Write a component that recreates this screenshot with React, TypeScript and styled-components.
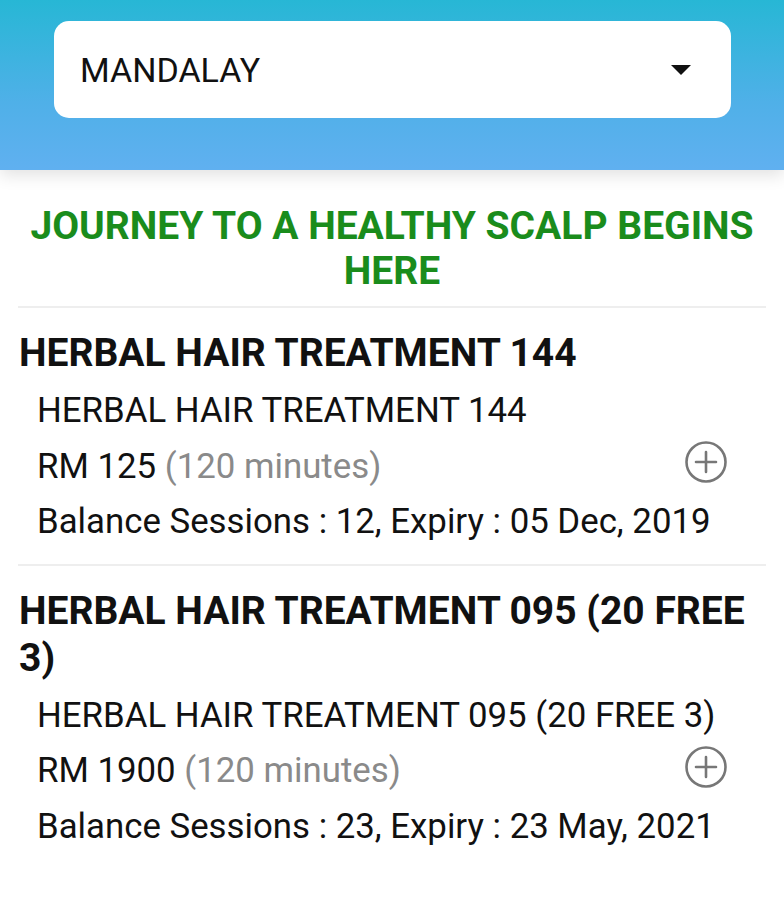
import React from "react";
import styled, { createGlobalStyle } from "styled-components";

const Global = createGlobalStyle`
  html, body { margin: 0; padding: 0; background: #fff; }
  body { font-family: Roboto, "Noto Sans", Arial, sans-serif; }
`;

const Page = styled.div`
  width: 784px;
  min-height: 900px;
  background: #fff;
`;

const Header = styled.header`
  height: 170px;
  background: linear-gradient(180deg, #27b7d5 0%, #4fb0e8 60%, #60b0f0 100%);
  box-shadow: 0 5px 16px rgba(0, 0, 0, 0.12);
  padding: 21px 53px 0 54px;
  box-sizing: border-box;
  position: relative;
  z-index: 1;
`;

const SelectBox = styled.div`
  height: 97px;
  background: #fff;
  border-radius: 15px;
  display: flex;
  align-items: center;
  justify-content: space-between;
  padding: 0 40px 0 26px;
  box-sizing: border-box;
`;

const SelectText = styled.span`
  font-size: 34px;
  color: #111;
`;

const Caret = styled.span`
  width: 0;
  height: 0;
  border-left: 10px solid transparent;
  border-right: 10px solid transparent;
  border-top: 10px solid #111;
`;

const Content = styled.main`
  padding: 34px 18px 0 18px;
`;

const Tagline = styled.h1`
  margin: 0;
  text-align: center;
  color: #1a8c1c;
  font-weight: 700;
  font-size: 39px;
  line-height: 45px;
  padding: 0 10px 12px;
  border-bottom: 2px solid #eeeeee;
`;

const Package = styled.section<{ $last?: boolean }>`
  padding: 22px 0 14px 0;
  border-bottom: ${(p) => (p.$last ? "none" : "2px solid #eeeeee")};
`;

const PackageTitle = styled.h2`
  margin: 0 0 6px 1px;
  font-size: 39px;
  line-height: 47px;
  font-weight: 700;
  color: #111;
`;

const Line = styled.div`
  display: flex;
  align-items: center;
  justify-content: space-between;
  padding-left: 19px;
  padding-right: 38px;
  font-size: 34.8px;
  line-height: 55.5px;
  color: #111;
`;

const Muted = styled.span`
  color: #8a8a8a;
`;

const PlusButton = styled.button`
  border: 0;
  background: none;
  padding: 0;
  width: 44px;
  height: 44px;
  margin-top: -8px;
  display: flex;
  align-items: center;
  justify-content: center;
  cursor: pointer;
`;

const PlusIcon = () => (
  <svg width="44" height="44" viewBox="0 0 44 44" fill="none">
    <circle cx="22" cy="22" r="19.5" stroke="#777" strokeWidth="2.6" />
    <path d="M22 12v20M12 22h20" stroke="#777" strokeWidth="2.6" strokeLinecap="round" />
  </svg>
);

type Pkg = { title: string; name: string; price: string; minutes: string; sessions: number; expiry: string };

const packages: Pkg[] = [
  {
    title: "HERBAL HAIR TREATMENT 144",
    name: "HERBAL HAIR TREATMENT 144",
    price: "RM 125",
    minutes: "(120 minutes)",
    sessions: 12,
    expiry: "05 Dec, 2019",
  },
  {
    title: "HERBAL HAIR TREATMENT 095 (20 FREE 3)",
    name: "HERBAL HAIR TREATMENT 095 (20 FREE 3)",
    price: "RM 1900",
    minutes: "(120 minutes)",
    sessions: 23,
    expiry: "23 May, 2021",
  },
];

export default function App() {
  return (
    <Page>
      <Global />
      <Header>
        <SelectBox>
          <SelectText>MANDALAY</SelectText>
          <Caret />
        </SelectBox>
      </Header>
      <Content>
        <Tagline>JOURNEY TO A HEALTHY SCALP BEGINS HERE</Tagline>
        {packages.map((p, i) => (
          <Package key={p.title} $last={i === packages.length - 1}>
            <PackageTitle>{p.title}</PackageTitle>
            <Line>{p.name}</Line>
            <Line>
              <span>
                {p.price} <Muted>{p.minutes}</Muted>
              </span>
              <PlusButton aria-label="add">
                <PlusIcon />
              </PlusButton>
            </Line>
            <Line>
              Balance Sessions : {p.sessions}, Expiry : {p.expiry}
            </Line>
          </Package>
        ))}
      </Content>
    </Page>
  );
}
